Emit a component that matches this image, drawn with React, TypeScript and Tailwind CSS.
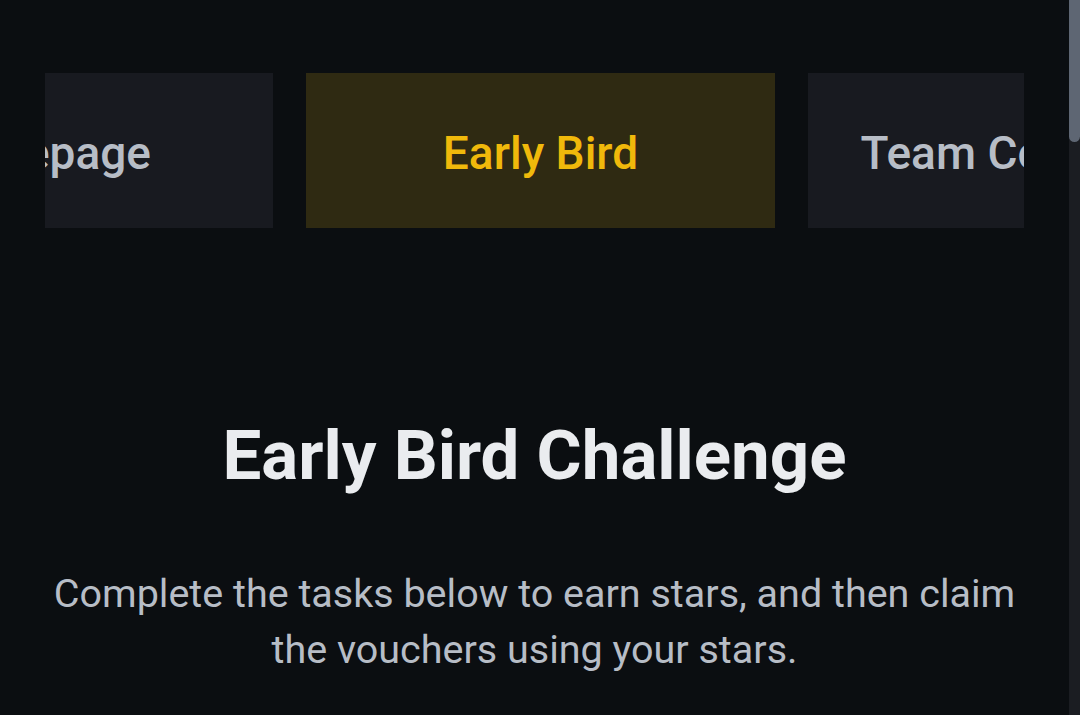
export default function App() {
  const tabs = ["Homepage", "Early Bird", "Team Community"];
  return (
    <div
      className="flex h-[715px] w-[1080px] overflow-hidden bg-[#0b0e11]"
      style={{ fontFamily: "Roboto, 'Noto Sans', sans-serif" }}
    >
      <div className="flex min-w-0 flex-1 flex-col">
        <div className="mx-[45px] mt-[73px] overflow-hidden">
          <div className="-ml-[241px] flex gap-[33px]">
            {tabs.map((t) => (
              <div
                key={t}
                className={
                  "flex h-[155px] w-[469px] shrink-0 items-center justify-center whitespace-nowrap pt-[6px] text-[46px] font-medium " +
                  (t === "Early Bird" ? "bg-[#2f2a12] text-[#f0b90b]" : "bg-[#181a20] text-[#b7bdc6]")
                }
              >
                {t}
              </div>
            ))}
          </div>
        </div>
        <h1 className="mt-[188px] text-center text-[69px] font-bold leading-[80px] text-[#eaecef]">
          Early Bird Challenge
        </h1>
        <p className="mx-auto mt-[70px] max-w-[1000px] text-center text-[39.5px] leading-[56px] text-[#b7bdc6]">
          Complete the tasks below to earn stars, and then claim the vouchers using your stars.
        </p>
      </div>
      <div className="w-[11px] bg-[#1b1d22]">
        <div className="h-[142px] rounded-b-[6px] bg-[#5e6673]" />
      </div>
    </div>
  );
}
